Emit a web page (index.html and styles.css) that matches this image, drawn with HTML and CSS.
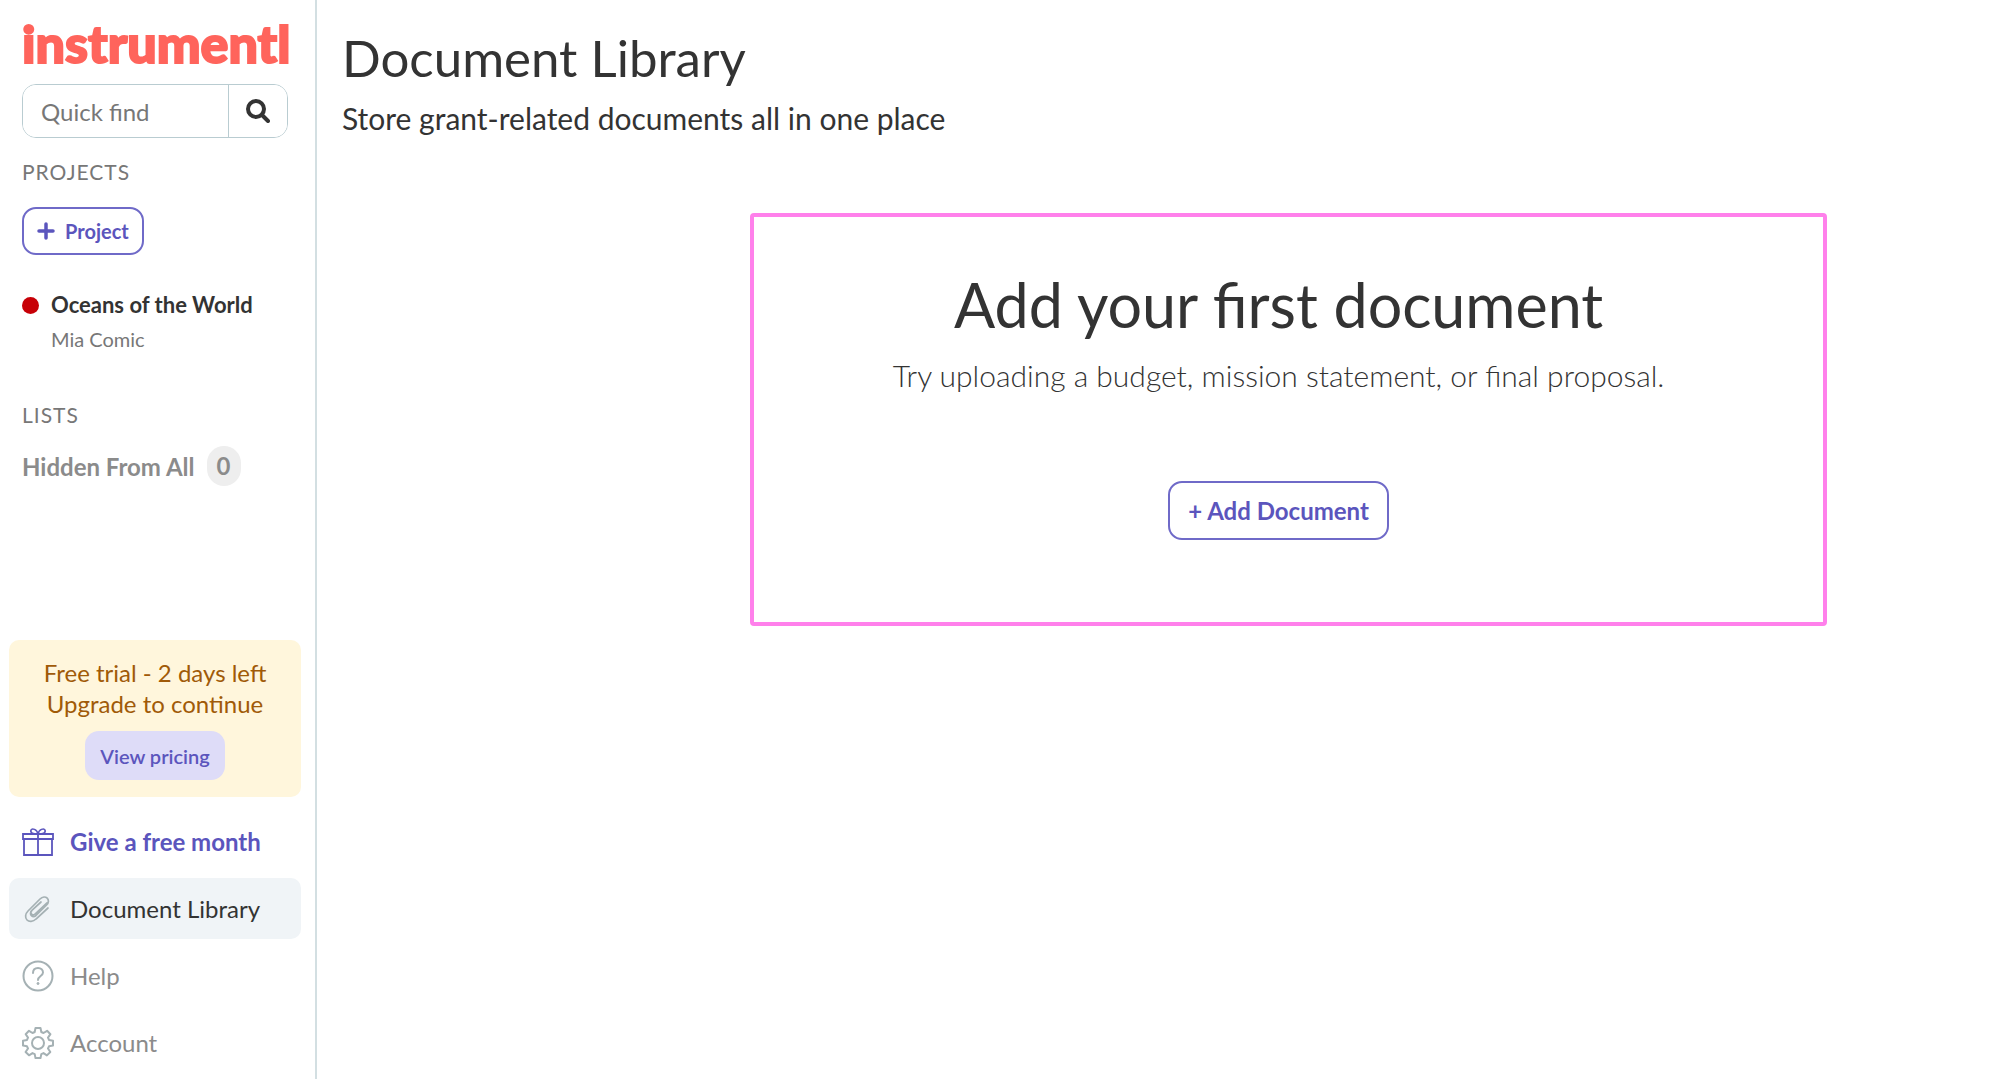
FILE: index.html
```html
<!DOCTYPE html>
<html lang="en">
<head>
  <meta charset="UTF-8" />
  <meta name="viewport" content="width=device-width, initial-scale=1.0"/>
  <title>Document Library</title>
  <link rel="stylesheet" href="styles.css">
</head>
<body>

  <!-- Sidebar -->
  <aside class="sidebar">
    <div class="sidebar-top">
      <a class="logo" href="#">instrumentl</a>

      <form class="search">
        <input class="search-input" type="text" placeholder="Quick find" aria-label="Quick find"/>
        <button class="search-btn" type="button" aria-label="Search">
          <svg width="24" height="24" viewBox="0 0 24 24" fill="none" stroke="currentColor">
            <circle cx="10" cy="10" r="8" stroke-width="4"/>
            <path d="M16 16l6 6" stroke-width="4" stroke-linecap="round"/>
          </svg>
        </button>
      </form>

      <h2 class="label">PROJECTS</h2>
      <button class="button project-btn" type="button">
        <svg width="18" height="18" viewBox="0 0 18 18" fill="none" stroke="currentColor" stroke-width="3.500" stroke-linecap="round">
          <path d="M9 2v14M2 9h14"/>
        </svg>
        Project
      </button>

      <a class="project" href="#">
        <span class="dot"></span>
        <span class="project-name">Oceans of the World</span>
        <span class="project-owner">Mia Comic</span>
      </a>

      <h2 class="label">LISTS</h2>
      <a class="list-link" href="#">Hidden From All <span class="count">0</span></a>
    </div>

    <div class="sidebar-bottom">
      <div class="trial">
        <div>Free trial - 2 days left</div>
        <div>Upgrade to continue</div>
        <button class="pricing-btn" type="button">View pricing</button>
      </div>

      <nav class="menu">
        <a class="menu-item gift" href="#">
          <svg width="32" height="32" viewBox="0 0 32 32" fill="none" stroke="currentColor" stroke-width="1.800">
            <path d="M1 8h30v5H1zM2 13v16h28V13M16 8v21"/>
            <path d="M16 8c-5 0-8-1-7-4 1-2 6-1 7 4 1-5 6-6 7-4 1 3-2 4-7 4z" stroke-width="1.600"/>
          </svg>
          Give a free month
        </a>
        <a class="menu-item current" href="#">
          <svg width="32" height="32" viewBox="0 0 32 32" fill="none" stroke="currentColor" stroke-width="1.700" stroke-linecap="round">
            <path d="M25 10L13 21a2.400 2.400 0 0 1-3.400-3.400L19 9M26 15L14 26c-3 3-7 3-9 1s-2-6 1-9L18 6c2.500-2.500 5.500-2.500 7.200-.8s1.700 4.500-.6 6.800L14 22.500c-1.500 1.300-3.400 1.300-4.600.1s-1.200-3 .2-4.400"/>
          </svg>
          Document Library
        </a>
        <a class="menu-item" href="#">
          <svg width="32" height="32" viewBox="0 0 32 32" fill="none" stroke="currentColor" stroke-width="2">
            <circle cx="16" cy="16" r="14.500"/>
            <path d="M11 13c0-3 2-5 5-5s5 2 5 4.500c0 3.500-5 3.500-5 7.500" stroke-linecap="round"/>
            <circle cx="16" cy="23.500" r="1" fill="currentColor" stroke-width="1"/>
          </svg>
          Help
        </a>
        <a class="menu-item" href="#">
          <svg width="32" height="32" viewBox="0 0 32 32" fill="none" stroke="currentColor" stroke-width="2" stroke-linejoin="round">
            <circle cx="16" cy="16" r="6"/>
            <path d="M13.500 1h5l.8 4 2.200 1 3.600-2.200 3.300 3.400L26 10.600l1 2.300 4 .8v4.800l-4 .8-1 2.200 2.300 3.500-3.400 3.400-3.400-2.300-2.200 1-.8 4h-5l-.8-4-2.200-1L7 28.300 3.600 25 6 21.500l-1-2.200-4-.8v-4.800l4-.8 1-2.300-2.300-3.400L7 3.800 10.500 6l2.200-1z"/>
          </svg>
          Account
        </a>
      </nav>
    </div>
  </aside>

  <!-- Main content -->
  <main class="content">
    <h1 class="title">Document Library</h1>
    <p class="subtitle">Store grant-related documents all in one place</p>

    <section class="empty-box">
      <h2 class="empty-title">Add your first document</h2>
      <p class="empty-text">Try uploading a budget, mission statement, or final proposal.</p>
      <button class="button add-btn" type="button">+ Add Document</button>
    </section>
  </main>

</body>
</html>
```
FILE: styles.css
```css
* {
  box-sizing: border-box;
}

body {
  font-family: Lato, sans-serif;
  font-size: 24px;
  color: #333;
  background-color: #fff;
  margin: 0;
  display: flex;
  min-height: 100vh;
}

a {
  color: inherit;
  text-decoration: none;
}

button,
input {
  font-family: inherit;
  cursor: pointer;
}

.sidebar {
  flex: none;
  width: 317px;
  padding: 16px 14px 6px 9px;
  border-right: 2px solid #d3dfe2;
  display: flex;
  flex-direction: column;
  justify-content: space-between;
}

.sidebar-top {
  padding: 0 13px;
}

.logo {
  display: block;
  font-size: 52px;
  font-weight: 900;
  line-height: 54px;
  color: #ff645c;
  -webkit-text-stroke: 2px #ff645c;
}

.search {
  display: flex;
  height: 54px;
  margin-top: 14px;
  border: 1px solid #b9ccd1;
  border-radius: 14px;
  overflow: hidden;
}

.search-input {
  flex: 1;
  min-width: 0;
  padding: 0 18px;
  border: none;
  font-size: 24px;
  cursor: text;
}

.search-input::placeholder {
  color: #777;
}

.search-btn {
  width: 59px;
  padding: 0;
  border: none;
  border-left: 1px solid #b9ccd1;
  background-color: #fff;
  color: #333;
}

.search-btn svg {
  vertical-align: middle;
}

.label {
  margin: 19px 0 16px;
  font-size: 21px;
  line-height: 30px;
  font-weight: 400;
  letter-spacing: 1px;
  color: #777;
}

.button {
  border: 2px solid #6f6ac8;
  border-radius: 14px;
  background-color: #fff;
  color: #5b55bd;
  font-weight: 700;
}

.project-btn {
  display: flex;
  align-items: center;
  gap: 10px;
  height: 48px;
  margin-top: 20px;
  padding: 0 13px;
  font-size: 20px;
}

.project {
  display: grid;
  grid-template-columns: 17px 1fr;
  column-gap: 12px;
  align-items: center;
  margin: 33px 0 44px;
}

.dot {
  width: 17px;
  height: 17px;
  border-radius: 50%;
  background-color: #c70007;
}

.project-name {
  font-size: 22px;
  line-height: 34px;
  font-weight: 700;
}

.project-owner {
  grid-column: 2;
  font-size: 20px;
  line-height: 34px;
  color: #777;
}

.list-link {
  display: flex;
  align-items: center;
  gap: 12px;
  font-weight: 700;
  color: #8b8b8b;
}

.count {
  width: 34px;
  line-height: 40px;
  border-radius: 17px;
  background-color: #eee;
  text-align: center;
}

.trial {
  padding: 17px 0;
  border-radius: 10px;
  background-color: #fff6dc;
  color: #a05a08;
  line-height: 31px;
  text-align: center;
}

.pricing-btn {
  height: 49px;
  margin-top: 12px;
  padding: 0 15px;
  border: none;
  border-radius: 14px;
  background-color: #dedcf8;
  color: #5b55bd;
  font-size: 20px;
  font-weight: 600;
  display: inline-block;
  vertical-align: top;
}

.menu {
  display: flex;
  flex-direction: column;
  gap: 6px;
  margin-top: 14px;
}

.menu-item {
  display: flex;
  align-items: center;
  gap: 16px;
  height: 61px;
  padding: 0 13px;
  border-radius: 10px;
  color: #8b8b8b;
}

.menu-item svg {
  color: #a5b1b4;
}

.gift,
.gift svg {
  color: #5b55bd;
  font-weight: 700;
}

.current {
  background-color: #f0f4f7;
  color: #333;
}

.content {
  flex: 1;
  min-width: 0;
  padding: 28px 25px;
}

.title {
  margin: 0;
  font-size: 51px;
  line-height: 60px;
  font-weight: 400;
}

.subtitle {
  margin: 10px 0 0;
  font-size: 30px;
  line-height: 40px;
}

.empty-box {
  width: 66%;
  margin: 75px 9% 0 auto;
  padding: 52px 20px 82px 0;
  border: 4px solid #ff80eb;
  border-radius: 4px;
  text-align: center;
}

.empty-title {
  margin: 0;
  font-size: 61px;
  line-height: 72px;
  font-weight: 400;
}

.empty-text {
  margin: 14px 0 86px;
  font-size: 30px;
  line-height: 40px;
  font-weight: 300;
}

.add-btn {
  height: 59px;
  padding: 0 18px;
  font-size: 24px;
}
```
